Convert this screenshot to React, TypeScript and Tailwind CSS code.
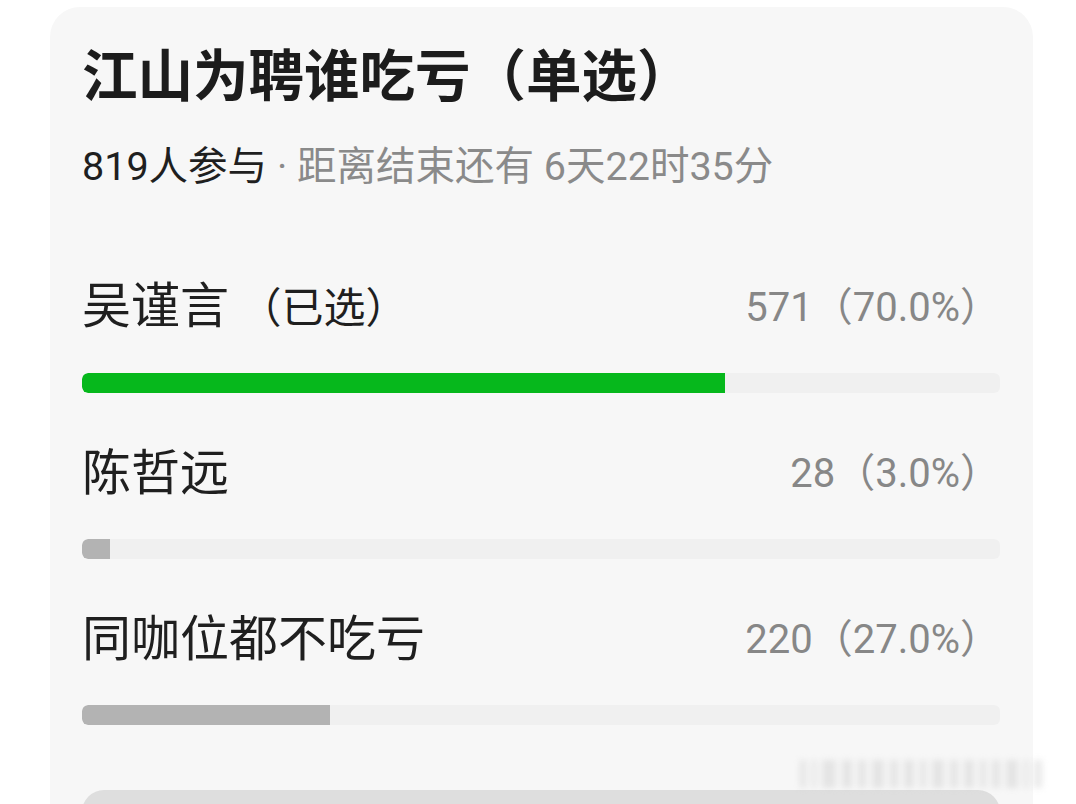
import React from "react";

const font = { fontFamily: "Roboto, 'Noto Sans CJK SC', sans-serif" };

type Opt = { name: string; suffix?: string; count: string; pct: number; selected?: boolean };

const options: Opt[] = [
  { name: "吴谨言", suffix: " （已选）", count: "571（70.0%）", pct: 70, selected: true },
  { name: "陈哲远", count: "28（3.0%）", pct: 3 },
  { name: "同咖位都不吃亏", count: "220（27.0%）", pct: 27 },
];

export default function App() {
  return (
    <div className="relative h-[804px] w-[1076px] overflow-hidden bg-white" style={font}>
      <div className="ml-[50px] mt-[7px] w-[983px] rounded-[30px] bg-[#f7f7f7] pl-[32px] pr-[33px] pt-[39px] pb-[40px]">
        <div className="h-[64px] whitespace-nowrap text-[55.5px] font-bold leading-[64px] text-[#1c1c1c]">
          江山为聘谁吃亏（单选）
        </div>
        <div className="mt-[35px] h-[44px] whitespace-nowrap text-[39.5px] leading-[44px] text-[#8a8a8a]">
          <span className="text-[#1f1f1f]">819人参与</span> · 距离结束还有 6天22时35分
        </div>
        <div className="mt-[89px] flex flex-col gap-[51px]">
          {options.map((o) => (
            <div key={o.name} className="flex flex-col">
              <div className="flex h-[60px] items-center justify-between">
                <span className="whitespace-pre text-[49px] leading-[60px] text-[#1f1f1f]">
                  {o.name}
                  {o.suffix && <span className="text-[42px]">{o.suffix}</span>}
                </span>
                <span className="whitespace-nowrap text-[40px] leading-[60px] text-[#878787]">{o.count}</span>
              </div>
              <div className="mt-[35px] h-[20px] w-full overflow-hidden rounded-[6px] bg-[#f0f0f0]">
                <div
                  className={o.selected ? "h-full rounded-l-[6px] bg-[#06b81c]" : "h-full rounded-l-[6px] bg-[#b3b3b3]"}
                  style={{ width: `${o.pct}%` }}
                />
              </div>
            </div>
          ))}
        </div>
        <div className="mt-[65px] h-[80px] w-full rounded-[22px] bg-[#dedede]" />
      </div>
      <div className="absolute left-[800px] top-[758px] flex h-[32px] items-center gap-[6px] opacity-40 blur-[3px]">
        {[6, 4, 14, 10, 8, 12, 8, 10, 6, 12, 8, 10, 6, 8, 12, 4, 8].map((w, i) => (
          <div key={i} className="h-[28px] bg-[#c8c8c8]" style={{ width: w }} />
        ))}
      </div>
    </div>
  );
}
